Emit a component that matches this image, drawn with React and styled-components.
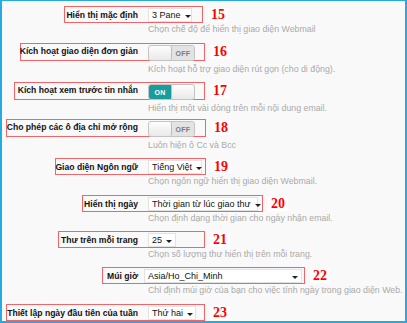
import React from 'react';
import styled, { createGlobalStyle } from 'styled-components';

const Global = createGlobalStyle`
  body {
    margin: 0;
    background: #fff;
  }
`;

const Page = styled.div`
  width: 407px;
  height: 323px;
  box-sizing: border-box;
  border: 2px solid #27a9e1;
  border-top-width: 1px;
  background: #f9f9f9;
  padding-top: 7px;
  font-family: "Liberation Sans", Arial, sans-serif;
  overflow: hidden;
`;

const Row = styled.div`
  position: relative;
  display: grid;
  grid-template-columns: 146px 1fr;
  margin-bottom: ${p => p.$mb}px;
`;

const Label = styled.div`
  text-align: right;
  padding-right: 10px;
  padding-top: ${p => (p.$toggle ? '1px' : '2px')};
  font-size: 8.6px;
  font-weight: bold;
  line-height: 11px;
  color: #111;
  white-space: nowrap;
  position: relative;
  z-index: 1;
`;

const Field = styled.div`
  display: flex;
  flex-direction: column;
  align-items: flex-start;
  position: relative;
  z-index: 1;
`;

const Desc = styled.div`
  margin-top: ${p => (p.$toggle ? '2px' : '1px')};
  font-size: 8.8px;
  line-height: 12px;
  color: #a9a9a9;
  white-space: nowrap;
`;

const Select = styled.div`
  box-sizing: border-box;
  width: ${p => p.$w}px;
  height: 14px;
  margin-left: ${p => p.$shift || 0}px;
  padding: 0 3px 0 3px;
  display: flex;
  align-items: center;
  justify-content: space-between;
  background: #fff;
  border: 1px solid #e2e2e2;
  font-size: 9px;
  color: #111;
  white-space: nowrap;
`;

const Caret = styled.span`
  width: 0;
  height: 0;
  margin-left: 4px;
  margin-top: 2px;
  border-left: 3px solid transparent;
  border-right: 3px solid transparent;
  border-top: 3px solid #222;
`;

const Switch = styled.div`
  box-sizing: border-box;
  width: 47px;
  height: 16px;
  display: flex;
  border: 1px solid #c4c4c4;
  border-radius: 3px;
  overflow: hidden;
  background: #e3e3e3;
`;

const Knob = styled.div`
  width: 22px;
  background: linear-gradient(#fdfdfd, #e9e9e9);
  border-left: ${p => (p.$right ? '1px solid #bdbdbd' : 'none')};
  border-right: ${p => (p.$right ? 'none' : '1px solid #bdbdbd')};
  border-radius: 2px;
`;

const SwitchText = styled.div`
  flex: 1;
  display: flex;
  align-items: center;
  justify-content: center;
  font-size: 7px;
  font-weight: bold;
  color: ${p => (p.$on ? '#fff' : '#7a7a7a')};
  background: ${p => (p.$on ? '#1a9c9a' : '#e3e3e3')};
  letter-spacing: 0.3px;
`;

const Note = styled.div`
  position: absolute;
  left: ${p => p.$left}px;
  top: -2px;
  display: flex;
  align-items: flex-start;
  gap: 5px;
  pointer-events: none;
`;

const Frame = styled.div`
  box-sizing: border-box;
  width: ${p => p.$w}px;
  height: ${p => p.$h}px;
  border: 1.5px solid #f26466;
`;

const Num = styled.div`
  margin-top: 2px;
  padding: 0 3px;
  background: #fff;
  font-family: "Liberation Serif", "Times New Roman", serif;
  font-weight: bold;
  font-size: 14px;
  line-height: 14px;
  color: #f00;
`;

const Toggle = ({ on }) => (
  <Switch>
    {on ? (
      <>
        <SwitchText $on>ON</SwitchText>
        <Knob $right />
      </>
    ) : (
      <>
        <Knob />
        <SwitchText>OFF</SwitchText>
      </>
    )}
  </Switch>
);

const rows = [
  { n: 15, label: 'Hiển thị mặc định', select: '3 Pane', w: 44, desc: 'Chọn chế độ để hiển thị giao diện Webmail', fl: 64, fw: 139, mb: 10 },
  { n: 16, label: 'Kích hoạt giao diện đơn giản', toggle: 'off', desc: 'Kích hoạt hỗ trợ giao diện rút gọn (cho di động).', fl: 20, fw: 185, mb: 9 },
  { n: 17, label: 'Kích hoạt xem trước tin nhắn', toggle: 'on', desc: 'Hiển thị một vài dòng trên mỗi nội dung email.', fl: 14, fw: 191, mb: 7 },
  { n: 18, label: 'Cho phép các ô địa chỉ mở rộng', toggle: 'off', desc: 'Luôn hiện ô Cc và Bcc', fl: 6, fw: 200, mb: 9 },
  { n: 19, label: 'Giao diện Ngôn ngữ', select: 'Tiếng Việt', w: 54, desc: 'Chọn ngôn ngữ hiển thị giao diện Webmail.', fl: 55, fw: 151, mb: 10 },
  { n: 20, label: 'Hiển thị ngày', select: 'Thời gian từ lúc giao thư', w: 110, desc: 'Chọn định dạng thời gian cho ngày nhận email.', fl: 82, fw: 181, mb: 9 },
  { n: 21, label: 'Thư trên mỗi trang', select: '25', w: 28, desc: 'Chọn số lượng thư hiển thị trên mỗi trang.', fl: 58, fw: 147, mb: 9 },
  { n: 22, label: 'Múi giờ', select: 'Asia/Ho_Chi_Minh', w: 158, shift: -4, desc: 'Chỉ định múi giờ của bạn cho việc tính ngày trong giao diện Web.', fl: 102, fw: 203, mb: 10 },
  { n: 23, label: 'Thiết lập ngày đầu tiên của tuần', select: 'Thứ hai', w: 48, fl: 6, fw: 199, mb: 0 },
];

export default function App() {
  return (
    <>
      <Global />
      <Page>
        {rows.map(r => {
          const isToggle = !!r.toggle;
          return (
            <Row key={r.n} $mb={r.mb}>
              <Label $toggle={isToggle}>{r.label}</Label>
              <Field>
                {isToggle ? (
                  <Toggle on={r.toggle === 'on'} />
                ) : (
                  <Select $w={r.w} $shift={r.shift}>
                    <span>{r.select}</span>
                    <Caret />
                  </Select>
                )}
                {r.desc && <Desc $toggle={isToggle}>{r.desc}</Desc>}
              </Field>
              <Note $left={r.fl - 2}>
                <Frame $w={r.fw} $h={isToggle ? 18 : 17} />
                <Num>{r.n}</Num>
              </Note>
            </Row>
          );
        })}
      </Page>
    </>
  );
}
